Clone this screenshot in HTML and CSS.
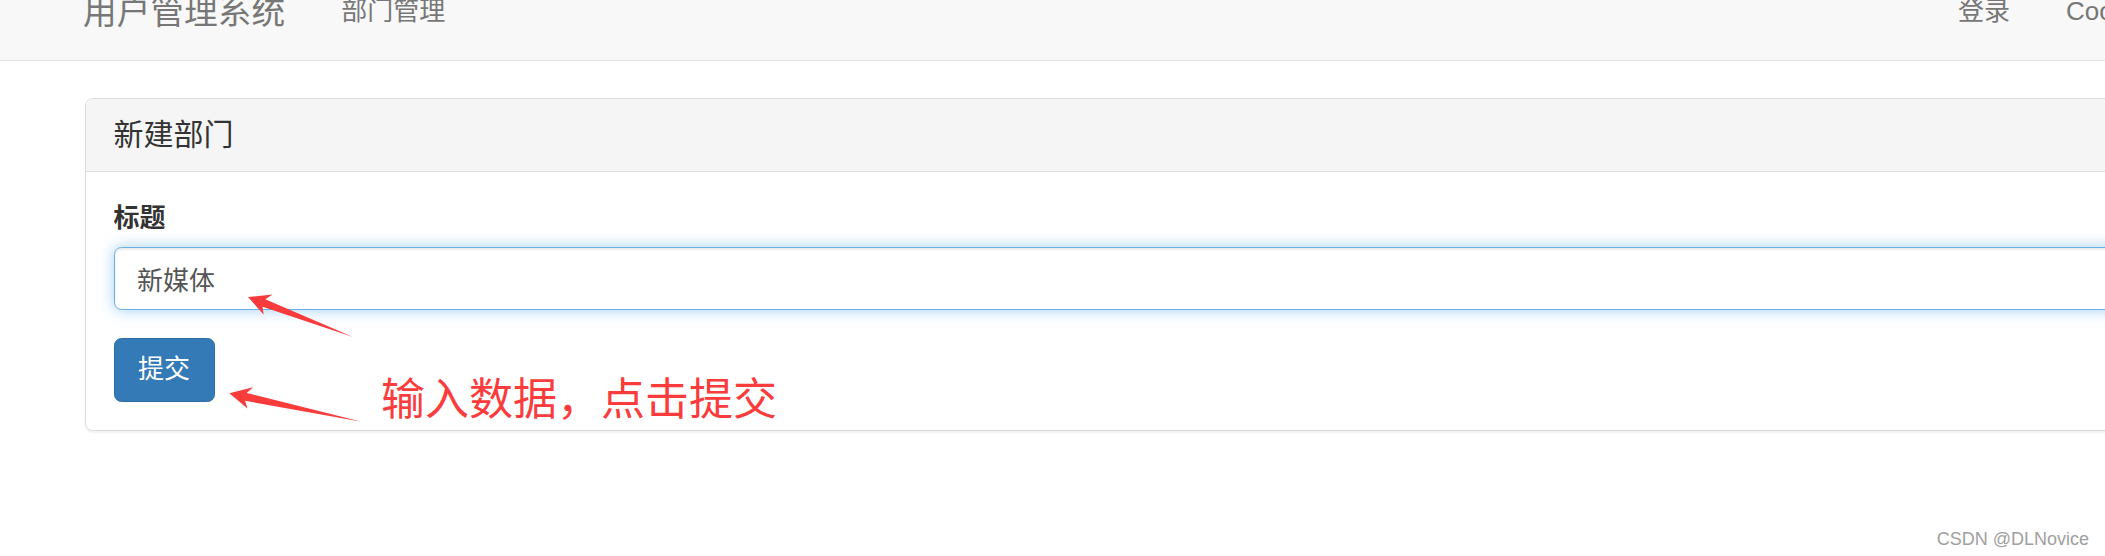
FILE: index.html
```html
<!DOCTYPE html>
<html lang="zh-CN">
<head>
<meta charset="utf-8">
<title>新建部门</title>
<link rel="stylesheet" href="styles.css">
</head>
<body>
<nav class="navbar">
  <div class="container nav-inner">
    <a class="brand" href="#">用户管理系统</a>
    <ul class="nav">
      <li><a href="#">部门管理</a></li>
    </ul>
    <ul class="nav nav-right">
      <li><a href="#">登录</a></li>
      <li><a href="#">Cookie</a></li>
    </ul>
  </div>
</nav>
<main class="container main">
  <section class="panel">
    <div class="panel-heading"><h3 class="panel-title">新建部门</h3></div>
    <div class="panel-body">
      <form>
        <div class="form-group">
          <label for="title">标题</label>
          <input id="title" class="form-control" type="text" value="新媒体">
        </div>
        <button type="button" class="btn">提交</button>
      </form>
    </div>
  </section>
</main>
<svg class="annot-arrows" width="2105" height="556" viewBox="0 0 2105 556">
  <polygon points="248,297 272.5,294.6 265.3,299.3 353,337 262.5,306.8 263.7,314.7"/>
  <polygon points="229.3,393.3 253.1,387.2 246.7,393 361.7,421.7 245.1,400.8 247.5,408.5"/>
</svg>
<div class="annot-text">输入数据，点击提交</div>
<div class="watermark">CSDN @DLNovice</div>
</body>
</html>
```
FILE: styles.css
```css
html, body {
  margin: 0;
  padding: 0;
}

body {
  position: relative;
  width: 2105px;
  height: 556px;
  overflow: hidden;
  background: #fff;
  color: #333;
  font-family: "Liberation Sans", "Noto Sans CJK SC", sans-serif;
}

a {
  text-decoration: none;
}

.container {
  box-sizing: border-box;
  width: 2120px;
  margin-left: 55px;
}

/* navbar */
.navbar {
  height: 60px;
  background: #f8f8f8;
  border-bottom: 1px solid #e5e5e5;
  margin-bottom: 37px;
}

.nav-inner {
  display: flex;
  align-items: flex-end;
  height: 100%;
}

.brand {
  display: block;
  padding: 0 28px 29px;
  font-size: 33.7px;
  line-height: 37.4px;
  color: #777;
}

.nav {
  display: flex;
  list-style: none;
  margin: 0;
  padding: 0;
}

.nav a {
  display: block;
  padding: 0 28px 30px;
  font-size: 26px;
  line-height: 37.4px;
  color: #777;
}

.nav-right {
  margin-left: auto;
}

/* main */
.main {
  padding: 0 28px 0 29.5px;
}

.panel {
  background: #fff;
  border: 1px solid #dcdcdc;
  border-radius: 7.5px;
  box-shadow: 0 2px 2px rgba(0, 0, 0, 0.05);
}

.panel-heading {
  padding: 19px 28px;
  background: #f5f5f5;
  border-bottom: 1px solid #dcdcdc;
  border-radius: 6.5px 6.5px 0 0;
}

.panel-title {
  margin: 0;
  font-size: 30px;
  font-weight: normal;
  line-height: 34px;
  color: #333;
}

.panel-body {
  padding: 28px;
}

form {
  margin: 0;
}

.form-group {
  margin-bottom: 28px;
  font-size: 26px;
  line-height: 37.4px;
}

label {
  display: inline-block;
  margin-bottom: 9.4px;
  font-weight: bold;
  color: #333;
}

.form-control {
  display: block;
  box-sizing: border-box;
  width: 100%;
  height: 63.5px;
  padding: 11px 22.4px;
  font-family: inherit;
  font-size: 26px;
  line-height: 37.4px;
  color: #555;
  background: #fff;
  border: 1px solid #66afe9;
  border-radius: 7.5px;
  outline: 0;
  box-shadow: inset 0 2px 2px rgba(0, 0, 0, 0.075), 0 0 15px rgba(102, 175, 233, 0.6);
}

.btn {
  display: inline-block;
  box-sizing: border-box;
  height: 63.4px;
  padding: 0 23.5px;
  font-family: inherit;
  font-size: 26px;
  line-height: 61.4px;
  color: #fff;
  background: #337ab7;
  border: 1px solid #2e6da4;
  border-radius: 7.5px;
  cursor: pointer;
}

/* annotations over the screenshot */
.annot-arrows {
  position: absolute;
  top: 0;
  left: 0;
  fill: #f83c3c;
  pointer-events: none;
}

.annot-text {
  position: absolute;
  left: 381px;
  top: 374px;
  font-family: "Noto Sans CJK SC", sans-serif;
  font-size: 44px;
  line-height: 44px;
  color: #fa3c3c;
  white-space: nowrap;
}

.watermark {
  position: absolute;
  right: 16px;
  top: 530px;
  font-family: "Liberation Sans", sans-serif;
  font-size: 18px;
  line-height: 18px;
  color: #a0a0a0;
}
```
